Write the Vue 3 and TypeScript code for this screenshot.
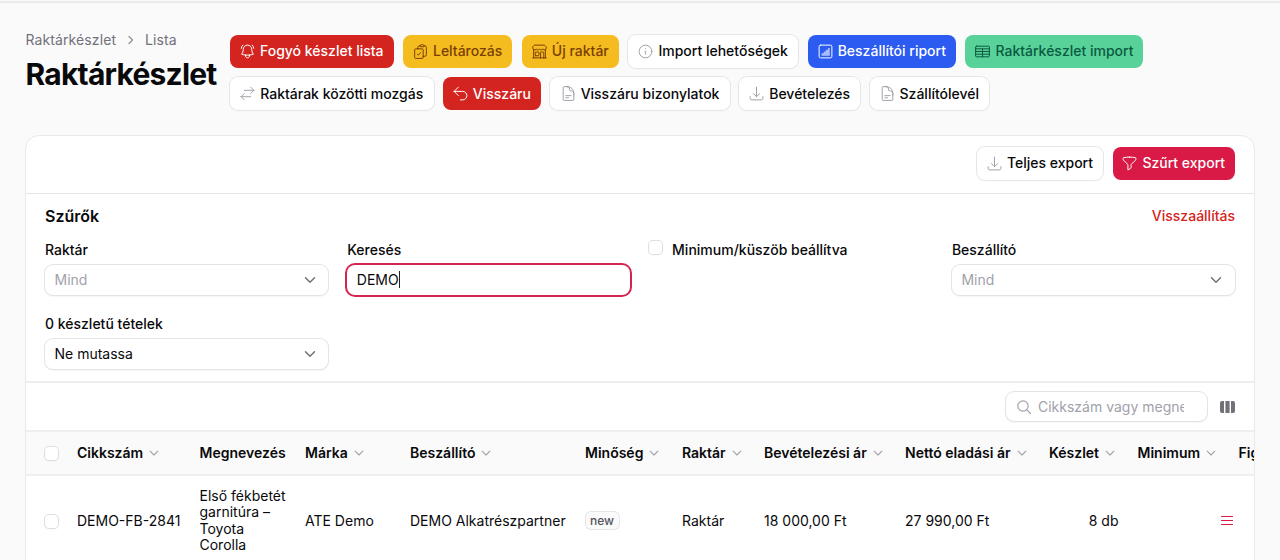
<script setup lang="ts">
interface Action {
  label: string
  icon: string
  tone: string
  width: number
}
interface Column {
  label: string
  width: number
  sortable: boolean
}

const icons: Record<string, string> = {
  bell: 'M14.857 17.082a23.848 23.848 0 0 0 5.454-1.31A8.967 8.967 0 0 1 18 9.75V9A6 6 0 0 0 6 9v.75a8.967 8.967 0 0 1-2.312 6.022c1.733.64 3.56 1.085 5.455 1.31m5.714 0a24.255 24.255 0 0 1-5.714 0m5.714 0a3 3 0 1 1-5.714 0M3.124 7.5A8.969 8.969 0 0 1 5.292 3m13.416 0a8.969 8.969 0 0 1 2.168 4.5',
  clipboard: 'M11.35 3.836c-.065.21-.1.433-.1.664 0 .414.336.75.75.75h4.5a.75.75 0 0 0 .75-.75 2.25 2.25 0 0 0-.1-.664m-5.8 0A2.251 2.251 0 0 1 13.5 2.25H15c1.012 0 1.867.668 2.15 1.586m-5.8 0c-.376.023-.75.05-1.124.08C9.095 4.01 8.25 4.973 8.25 6.108V8.25m8.9-4.414c.376.023.75.05 1.124.08 1.131.094 1.976 1.057 1.976 2.192V16.5A2.25 2.25 0 0 1 18 18.75h-2.25m-7.5-10.5H4.875c-.621 0-1.125.504-1.125 1.125v11.25c0 .621.504 1.125 1.125 1.125h9.75c.621 0 1.125-.504 1.125-1.125V18.75m-7.5-10.5h6.375c.621 0 1.125.504 1.125 1.125v9.375m-8.25-3 1.5 1.5 3-3.75',
  store: 'M13.5 21v-7.5a.75.75 0 0 1 .75-.75h3a.75.75 0 0 1 .75.75V21m-4.5 0H2.36m11.14 0H18m0 0h3.64m-1.39 0V9.349M3.75 21V9.349m0 0a3.001 3.001 0 0 0 3.75-.615A2.993 2.993 0 0 0 9.75 9.75c.896 0 1.7-.393 2.25-1.016a2.993 2.993 0 0 0 2.25 1.016c.896 0 1.7-.393 2.25-1.015a3.001 3.001 0 0 0 3.75.614m-16.5 0a3.004 3.004 0 0 1-.621-4.72l1.189-1.19A1.5 1.5 0 0 1 5.378 3h13.243a1.5 1.5 0 0 1 1.06.44l1.19 1.189a3 3 0 0 1-.621 4.72M6.75 18h3.75a.75.75 0 0 0 .75-.75V13.5a.75.75 0 0 0-.75-.75H6.75a.75.75 0 0 0-.75.75v3.75c0 .414.336.75.75.75Z',
  info: 'm11.25 11.25.041-.02a.75.75 0 0 1 1.063.852l-.708 2.836a.75.75 0 0 0 1.063.853l.041-.021M21 12a9 9 0 1 1-18 0 9 9 0 0 1 18 0Zm-9-3.75h.008v.008H12V8.25Z',
  chart: 'M5 3h14a2 2 0 0 1 2 2v14a2 2 0 0 1-2 2H5a2 2 0 0 1-2-2V5a2 2 0 0 1 2-2Z',
  table: 'M3.4 4.5h17.2c.6 0 1.1.5 1.1 1.1v12.8c0 .6-.5 1.1-1.1 1.1H3.4c-.6 0-1.1-.5-1.1-1.1V5.6c0-.6.5-1.1 1.1-1.1ZM2.25 8.25h19.5M2.25 12h19.5M2.25 15.75h19.5M12 8.25v11.25',
  swap: 'M7.5 21 3 16.5m0 0L7.5 12M3 16.5h13.5m0-13.5L21 7.5m0 0L16.5 12M21 7.5H7.5',
  undo: 'M9 15 3 9m0 0 6-6M3 9h12a6 6 0 0 1 0 12h-3',
  doc: 'M19.5 14.25v-2.625a3.375 3.375 0 0 0-3.375-3.375h-1.5A1.125 1.125 0 0 1 13.5 7.125v-1.5a3.375 3.375 0 0 0-3.375-3.375H8.25m0 12.75h7.5m-7.5 3H12M10.5 2.25H5.625c-.621 0-1.125.504-1.125 1.125v17.25c0 .621.504 1.125 1.125 1.125h12.75c.621 0 1.125-.504 1.125-1.125V11.25a9 9 0 0 0-9-9Z',
  download: 'M3 16.5v2.25A2.25 2.25 0 0 0 5.25 21h13.5A2.25 2.25 0 0 0 21 18.75V16.5M16.5 12 12 16.5m0 0L7.5 12m4.5 4.5V3',
  funnel: 'M12 3c2.755 0 5.455.232 8.083.678.533.09.917.556.917 1.096v1.044a2.25 2.25 0 0 1-.659 1.591l-5.432 5.432a2.25 2.25 0 0 0-.659 1.591v2.927a2.25 2.25 0 0 1-1.244 2.013L9.75 21v-6.568a2.25 2.25 0 0 0-.659-1.591L3.659 7.409A2.25 2.25 0 0 1 3 5.818V4.774c0-.54.384-1.006.917-1.096A48.32 48.32 0 0 1 12 3Z',
}

const actionRows: Action[][] = [
  [
    { label: 'Fogyó készlet lista', icon: 'bell', tone: 'danger', width: 163.5 },
    { label: 'Leltározás', icon: 'clipboard', tone: 'warning', width: 109.5 },
    { label: 'Új raktár', icon: 'store', tone: 'warning', width: 97 },
    { label: 'Import lehetőségek', icon: 'info', tone: 'plain', width: 170 },
    { label: 'Beszállítói riport', icon: 'chart', tone: 'info', width: 148.5 },
    { label: 'Raktárkészlet import', icon: 'table', tone: 'success', width: 178 },
  ],
  [
    { label: 'Raktárak közötti mozgás', icon: 'swap', tone: 'plain', width: 203.5 },
    { label: 'Visszáru', icon: 'undo', tone: 'danger', width: 98 },
    { label: 'Visszáru bizonylatok', icon: 'doc', tone: 'plain', width: 179.5 },
    { label: 'Bevételezés', icon: 'download', tone: 'plain', width: 121 },
    { label: 'Szállítólevél', icon: 'doc', tone: 'plain', width: 119.5 },
  ],
]

const exports: Action[] = [
  { label: 'Teljes export', icon: 'download', tone: 'plain', width: 126 },
  { label: 'Szűrt export', icon: 'funnel', tone: 'primary', width: 122.5 },
]

const columns: Column[] = [
  { label: 'Cikkszám', width: 122.5, sortable: true },
  { label: 'Megnevezés', width: 105.5, sortable: false },
  { label: 'Márka', width: 105, sortable: true },
  { label: 'Beszállító', width: 175, sortable: true },
  { label: 'Minőség', width: 97, sortable: true },
  { label: 'Raktár', width: 82, sortable: true },
  { label: 'Bevételezési ár', width: 141, sortable: true },
  { label: 'Nettó eladási ár', width: 144, sortable: true },
  { label: 'Készlet', width: 88.5, sortable: true },
  { label: 'Minimum', width: 101, sortable: true },
  { label: 'Figyelés', width: 90, sortable: true },
]
</script>

<template>
  <div class="page">
    <header class="head">
      <div class="titles">
        <nav class="crumbs">
          <span>Raktárkészlet</span>
          <svg viewBox="0 0 10 10"><path d="M3 1.5 6.5 5 3 8.5" /></svg>
          <span>Lista</span>
        </nav>
        <h1>Raktárkészlet</h1>
      </div>
      <div class="actions">
        <div v-for="(row, r) in actionRows" :key="r" class="action-row">
          <button v-for="a in row" :key="a.label" class="btn" :class="a.tone" :style="{ width: a.width + 'px' }">
            <svg class="icon" viewBox="0 0 24 24">
              <path v-if="a.icon === 'chart'" class="bars" d="M6.5 18v-3.500h3V12h3V9.500h3V7h2.500v11Z" />
              <path :d="icons[a.icon]" />
            </svg>
            <span>{{ a.label }}</span>
          </button>
        </div>
      </div>
    </header>

    <main class="card">
      <div class="export-bar">
        <button v-for="a in exports" :key="a.label" class="btn" :class="a.tone" :style="{ width: a.width + 'px' }">
          <svg class="icon" viewBox="0 0 24 24"><path :d="icons[a.icon]" /></svg>
          <span>{{ a.label }}</span>
        </button>
      </div>

      <section class="filters">
        <div class="filters-head">
          <h2>Szűrők</h2>
          <a>Visszaállítás</a>
        </div>
        <div class="grid">
          <div class="field">
            <label>Raktár</label>
            <div class="control muted"><span>Mind</span><svg class="chev" viewBox="0 0 12 12"><path d="M1.5 3.750 6 8.250 10.500 3.750" /></svg></div>
          </div>
          <div class="field">
            <label>Keresés</label>
            <div class="control focused"><span>DEMO</span><i class="caret"></i></div>
          </div>
          <div class="field check-field">
            <i class="check"></i><label>Minimum/küszöb beállítva</label>
          </div>
          <div class="field">
            <label>Beszállító</label>
            <div class="control muted"><span>Mind</span><svg class="chev" viewBox="0 0 12 12"><path d="M1.5 3.750 6 8.250 10.500 3.750" /></svg></div>
          </div>
          <div class="field">
            <label>0 készletű tételek</label>
            <div class="control"><span>Ne mutassa</span><svg class="chev" viewBox="0 0 12 12"><path d="M1.5 3.750 6 8.250 10.500 3.750" /></svg></div>
          </div>
        </div>
      </section>

      <div class="search-bar">
        <div class="search">
          <svg viewBox="0 0 16 16"><circle cx="7" cy="7" r="5.2" /><path d="m10.900 10.900 3.600 3.600" /></svg>
          <span>Cikkszám vagy megnevezés</span>
        </div>
        <svg class="cols" viewBox="0 0 15 12"><path d="M2 0h2v12H2a2 2 0 0 1-2-2V2a2 2 0 0 1 2-2ZM5.400 0h4.200v12H5.400ZM11 0h2a2 2 0 0 1 2 2v8a2 2 0 0 1-2 2h-2Z" /></svg>
      </div>

      <div class="table">
        <div class="tr th">
          <div class="sel"><i class="check"></i></div>
          <div v-for="c in columns" :key="c.label" class="cell" :style="{ width: c.width + 'px' }">
            <span>{{ c.label }}</span>
            <svg v-if="c.sortable" class="sort" viewBox="0 0 12 12"><path d="M2.200 4.200 6 8 9.800 4.200" /></svg>
          </div>
        </div>
        <div class="tr td">
          <div class="sel"><i class="check"></i></div>
          <div class="cell" :style="{ width: columns[0].width + 'px' }">DEMO-FB-2841</div>
          <div class="cell name" :style="{ width: columns[1].width + 'px' }">Első fékbetét<br />garnitúra –<br />Toyota<br />Corolla</div>
          <div class="cell" :style="{ width: columns[2].width + 'px' }">ATE Demo</div>
          <div class="cell" :style="{ width: columns[3].width + 'px' }">DEMO Alkatrészpartner</div>
          <div class="cell" :style="{ width: columns[4].width + 'px' }"><span class="badge">new</span></div>
          <div class="cell" :style="{ width: columns[5].width + 'px' }">Raktár</div>
          <div class="cell" :style="{ width: columns[6].width + 'px' }">18 000,00 Ft</div>
          <div class="cell" :style="{ width: columns[7].width + 'px' }">27 990,00 Ft</div>
          <div class="cell right" :style="{ width: columns[8].width + 'px' }">8 db</div>
          <div class="cell menu" :style="{ width: columns[9].width + 'px' }">
            <svg viewBox="0 0 12 11"><path d="M.5 1.500h11M.5 5.500h11M.5 9.500h11" /></svg>
          </div>
        </div>
      </div>
    </main>
  </div>
</template>

<style>
body {
  margin: 0;
  background: #fafafa;
}
</style>

<style scoped>
.page {
  box-sizing: border-box;
  width: 1280px;
  height: 560px;
  overflow: hidden;
  padding: 30px 25px 0;
  border-top: 1px solid #fafafa;
  box-shadow: inset 0 2px 0 #ebebec;
  background: #fafafa;
  color: #09090b;
  font: 400 14px/20px Inter, "Liberation Sans", sans-serif;
}
svg {
  fill: none;
  stroke: currentColor;
  stroke-width: 1.5;
  stroke-linecap: round;
  stroke-linejoin: round;
  flex: none;
}
.head {
  display: flex;
  height: 103.5px;
}
.titles {
  width: 205px;
  flex: none;
}
.crumbs {
  display: flex;
  align-items: center;
  height: 17px;
  padding-left: 0.5px;
  color: #71717a;
}
.crumbs span {
  letter-spacing: 0.1px;
}
.crumbs svg {
  width: 10px;
  height: 10px;
  margin: 0 9px 0 10px;
  stroke-width: 1.2;
  color: #8f8f98;
}
h1 {
  margin: 8px 0 0 0.5px;
  font-size: 30px;
  line-height: 36px;
  font-weight: 700;
  letter-spacing: -0.78px;
}
.actions {
  display: flex;
  flex-direction: column;
  gap: 9.5px;
  padding-top: 3.5px;
}
.action-row {
  display: flex;
  gap: 9.4px;
}
.btn {
  display: flex;
  align-items: center;
  justify-content: center;
  gap: 4px;
  box-sizing: border-box;
  height: 33px;
  padding: 0 1px 0 0;
  border: 0;
  border-radius: 8px;
  background: #fff;
  color: #09090b;
  font: 500 14px/20px Inter, "Liberation Sans", sans-serif;
  white-space: nowrap;
}
.icon {
  width: 17px;
  height: 17px;
  stroke-width: 1.4;
}
.icon .bars {
  fill: currentColor;
  fill-opacity: 0.6;
  stroke: none;
}
.plain {
  box-shadow: 0 0 0 1px #e6e6e8, 0 1px 2px rgba(0, 0, 0, 0.05);
}
.plain .icon {
  color: #a1a1aa;
}
.danger {
  background: #d42420;
  color: #fff;
}
.warning {
  background: #f4bc1e;
  color: #7a3f08;
}
.info {
  background: #2c5bf2;
  color: #fff;
}
.success {
  background: #58d299;
  color: #0a5a40;
}
.primary {
  background: #d91a46;
  color: #fff;
}
.card {
  box-sizing: border-box;
  width: 1230px;
  height: 440px;
  overflow: hidden;
  border: 1px solid #e9e9ea;
  border-radius: 14px 14px 0 0;
  background: #fff;
}
.export-bar {
  display: flex;
  justify-content: flex-end;
  gap: 9.5px;
  padding: 11px 19px 13px;
  border-bottom: 1px solid #e4e4e7;
}
.filters {
  height: 187px;
  padding: 0 19px;
  border-bottom: 2px solid #eeeeef;
}
.filters-head {
  display: flex;
  justify-content: space-between;
  align-items: center;
  padding-top: 11px;
  height: 23px;
}
h2 {
  margin: 0;
  font-size: 16px;
  font-weight: 600;
}
.filters-head a {
  color: #d42420;
  font-weight: 500;
}
.grid {
  display: grid;
  grid-template-columns: repeat(4, 283px);
  column-gap: 19.3px;
  row-gap: 18px;
  padding-top: 12px;
}
.field {
  height: 56px;
}
label {
  display: block;
  height: 21px;
  font-weight: 500;
}
.control {
  display: flex;
  align-items: center;
  box-sizing: border-box;
  height: 30px;
  margin-top: 4px;
  padding: 0 12.5px 0 9.5px;
  border-radius: 8px;
  background: #fff;
  box-shadow: 0 0 0 1px #e4e4e6, 0 1px 2px rgba(0, 0, 0, 0.12);
}
.control.muted span {
  color: #a1a1aa;
}
.control.focused {
  box-shadow: 0 0 0 2px #d42450;
}
.chev {
  width: 12px;
  height: 12px;
  margin-left: auto;
  color: #71717a;
}
.caret {
  width: 1px;
  height: 17px;
  background: #222;
}
.check {
  display: block;
  width: 13px;
  height: 13px;
  border-radius: 4px;
  background: #fff;
  box-shadow: 0 0 0 1px #dedee0, 0 1px 2px rgba(0, 0, 0, 0.08);
}
.check-field {
  display: flex;
  gap: 10px;
  margin-left: -0.5px;
}
.check-field .check {
  margin-top: 1px;
}
.search-bar {
  display: flex;
  align-items: center;
  justify-content: flex-end;
  gap: 13px;
  box-sizing: border-box;
  height: 47.5px;
  padding: 1px 19px 0 0;
}
.search {
  display: flex;
  align-items: center;
  box-sizing: border-box;
  width: 201px;
  height: 29px;
  padding: 0 23px 0 10px;
  border-radius: 8px;
  color: #a1a1aa;
  box-shadow: 0 0 0 1px #e4e4e6, 0 1px 2px rgba(0, 0, 0, 0.12);
}
.search svg {
  width: 16px;
  height: 16px;
  margin-right: 6px;
  stroke-width: 1.2;
}
.search span {
  overflow: hidden;
  white-space: nowrap;
}
.cols {
  width: 15px;
  height: 12px;
  fill: #71717a;
  stroke: none;
}
.table {
  width: 1300px;
}
.tr {
  display: flex;
  align-items: center;
}
.th {
  height: 42px;
  border-top: 2px solid #eeeeef;
  border-bottom: 2px solid #eeeeef;
  background: #fafafa;
  font-weight: 600;
}
.td {
  height: 89px;
}
.sel {
  width: 32px;
  padding-left: 19px;
  flex: none;
}
.tr .check {
  margin-top: 1.5px;
}
.cell {
  display: flex;
  align-items: center;
  flex: none;
  white-space: nowrap;
}
.sort {
  width: 12px;
  height: 12px;
  margin-left: 5px;
  stroke-width: 1.1;
  color: #a1a1aa;
}
.name {
  line-height: 16.3px;
}
.badge {
  margin-left: 0.5px;
  padding: 0 4.5px;
  border-radius: 5px;
  background: #fafafa;
  box-shadow: 0 0 0 1px #e6e6e8;
  color: #52525b;
  font-size: 12px;
  font-weight: 500;
  line-height: 17px;
}
.right {
  box-sizing: border-box;
  justify-content: flex-end;
  padding-right: 19px;
}
.menu {
  box-sizing: border-box;
  justify-content: flex-end;
  padding-right: 6px;
}
.menu svg {
  width: 12px;
  height: 11px;
  stroke: #d91a46;
  stroke-width: 1.1;
}
</style>
